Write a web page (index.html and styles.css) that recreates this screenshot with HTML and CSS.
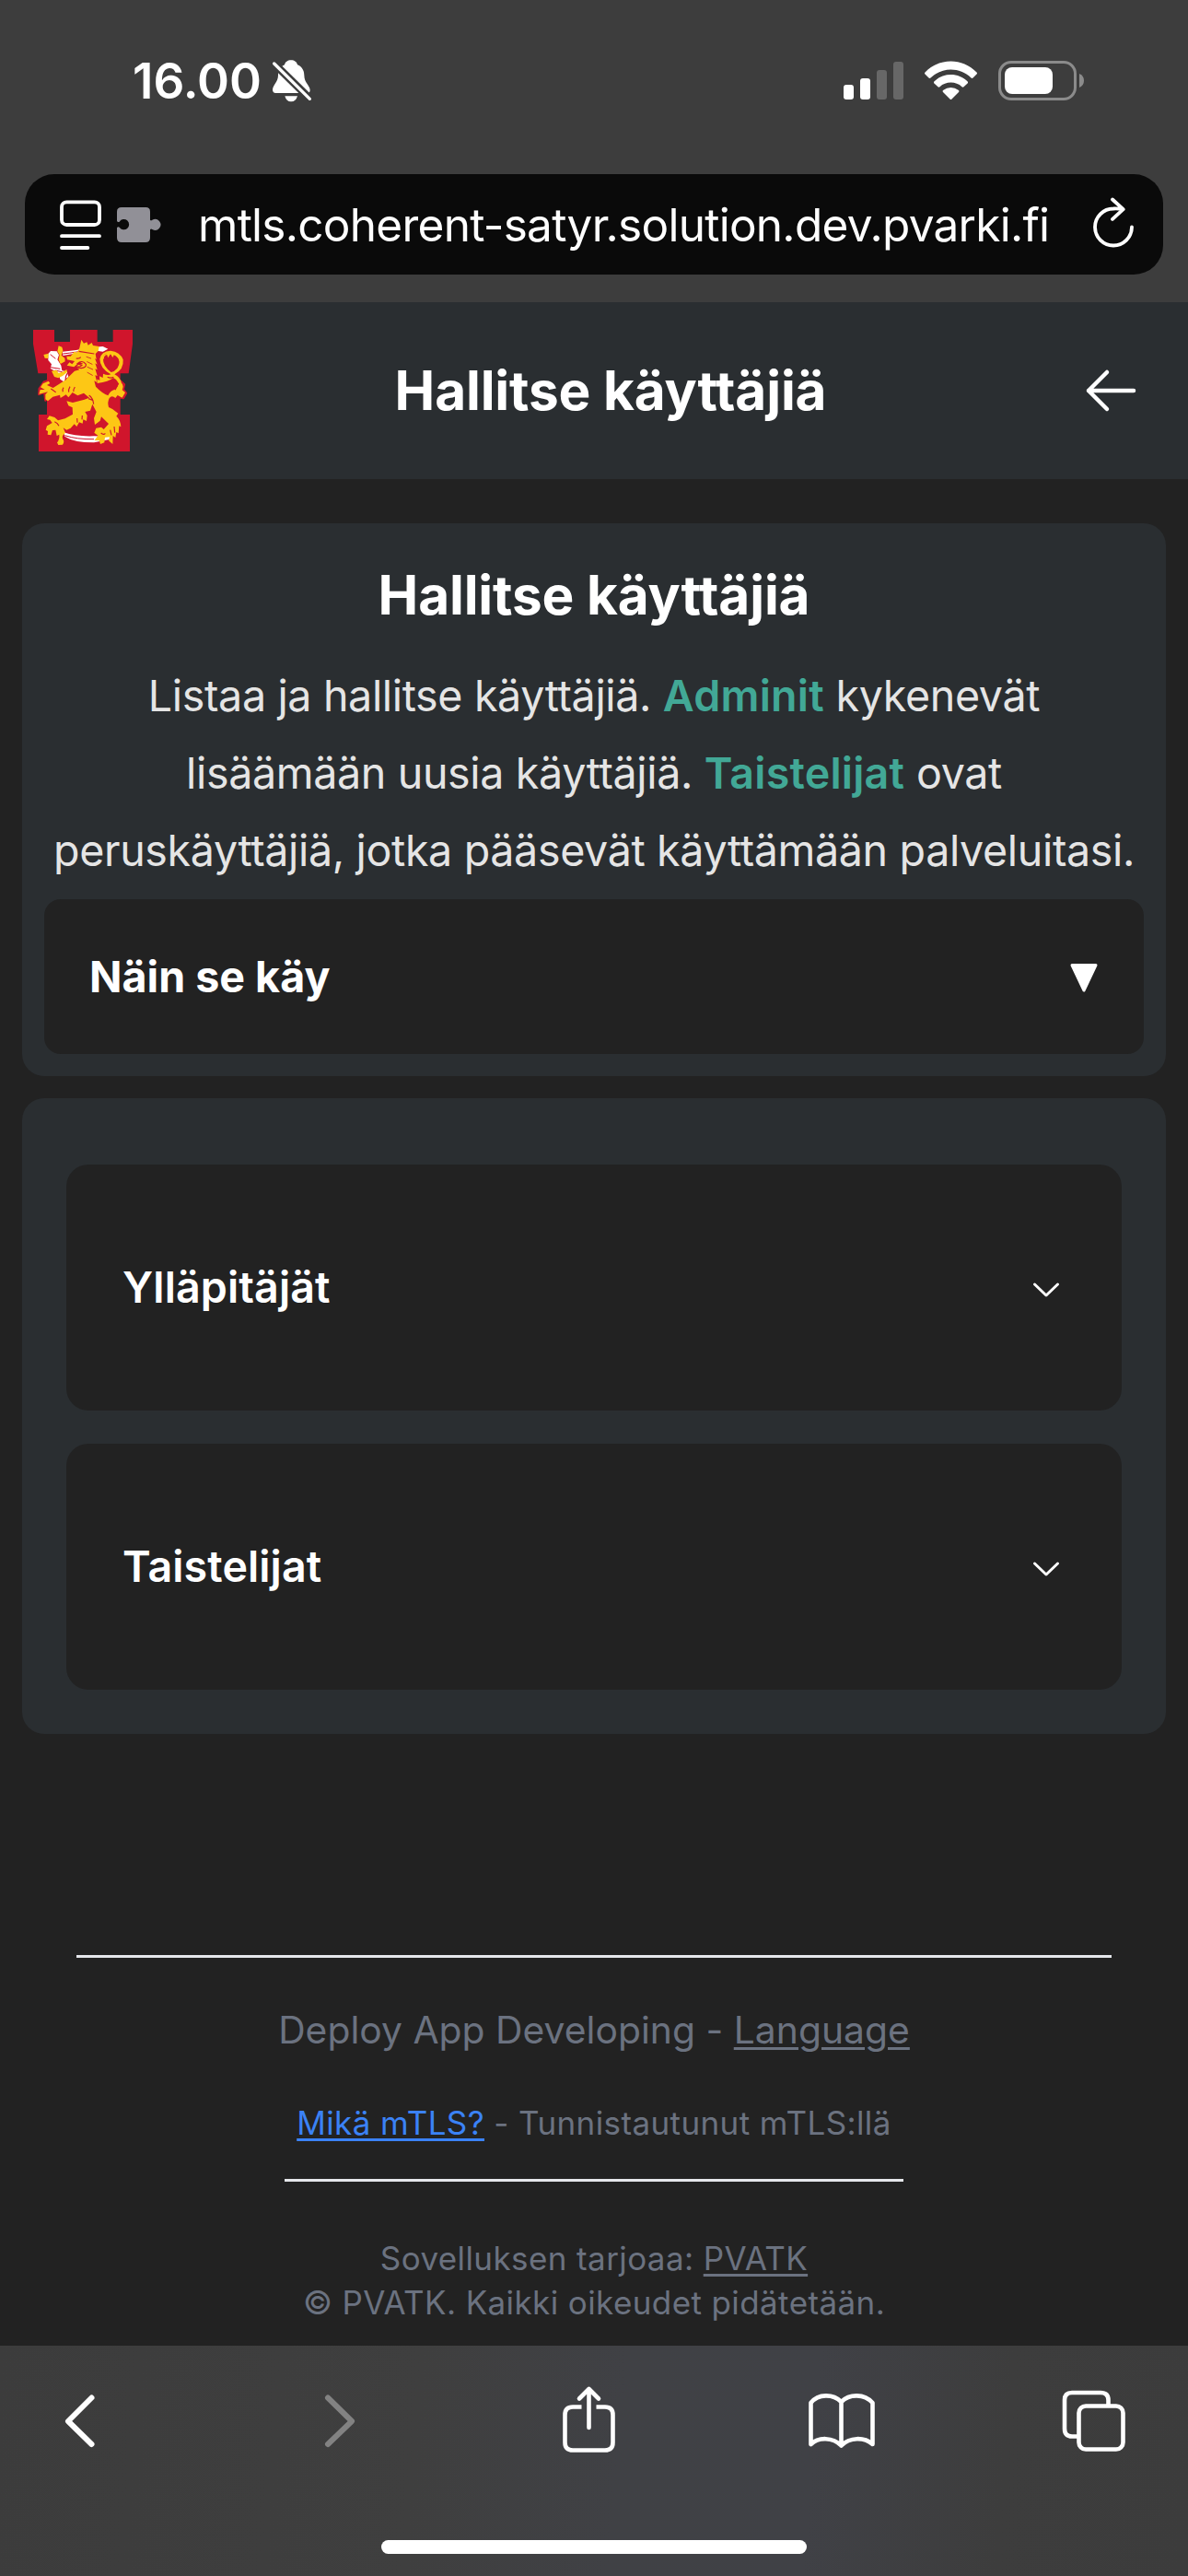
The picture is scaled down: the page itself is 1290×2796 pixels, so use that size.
FILE: index.html
```html
<!DOCTYPE html>
<html lang="fi">
<head>
<meta charset="utf-8">
<title>Hallitse käyttäjiä</title>
<link rel="stylesheet" href="styles.css">
</head>
<body>
<div class="screen">
  <div class="browser-top">
    <div class="status">
      <span class="clock">16.00</span>
      <svg class="bell" viewBox="36 24 150 150">
        <path d="M108 31C97 31 89 37 87 46C72 53 66 66 66 80C66 101 49 112 48 127Q48 138 58 138H160Q170 138 170 128C169 112 151 104 151 80C151 64 143 52 129 46C127 37 119 31 108 31Z" fill="#fff"/>
        <path d="M88 148H129Q124 166 108 166Q93 166 88 148Z" fill="#fff"/>
        <path d="M46 35L176 163" stroke="#3d3d3d" stroke-width="25"/>
        <path d="M53 42L169 157" stroke="#fff" stroke-width="10" stroke-linecap="round"/>
      </svg>
      <div class="indicators">
        <svg width="66" height="44" viewBox="916 65 66 44" fill="#fff">
          <rect x="916" y="91" width="11" height="16" rx="3"/>
          <rect x="934" y="84" width="11" height="23" rx="3"/>
          <rect x="952" y="75" width="11" height="32" rx="3" opacity=".22"/>
          <rect x="970" y="66" width="11" height="41" rx="3" opacity=".22"/>
        </svg>
        <svg width="58" height="44" viewBox="1004 65 58 44" fill="#fff">
          <path d="M1004.5 77.500C1020 61.500 1045 61.500 1060.500 77.500Q1061.500 78.500 1060.500 79.500L1056.500 83.500Q1055.500 84.300 1054.500 83.400C1042 71.500 1023 71.500 1010.500 83.400Q1009.500 84.300 1008.500 83.500L1004.500 79.500Q1003.500 78.500 1004.500 77.500Z"/>
          <path d="M1014.300 87.500C1024 77.500 1041 77.500 1050.700 87.500Q1051.500 88.500 1050.600 89.400L1046.500 93.300Q1045.600 94 1044.500 93.200C1038 87 1027 87 1020.500 93.200Q1019.400 94 1018.500 93.300L1014.400 89.400Q1013.500 88.500 1014.300 87.500Z"/>
          <path d="M1024 97Q1032.500 91 1041 97Q1042 98 1041 99L1033.500 106.500Q1032.500 107.500 1031.500 106.500L1024 99Q1023 98 1024 97Z"/>
        </svg>
        <svg width="94" height="44" viewBox="1084 65 94 44">
          <rect x="1085.500" y="66.500" width="82" height="40" rx="12.500" fill="none" stroke="#8b8b8b" stroke-width="3"/>
          <rect x="1091" y="72" width="52" height="29" rx="8" fill="#fff"/>
          <path d="M1172 79Q1177 81 1177 86.500T1172 94Z" fill="#8b8b8b"/>
        </svg>
      </div>
    </div>
    <div class="address">
      <svg class="reader" viewBox="27 30 144 174" fill="none" stroke="#fff" stroke-width="11.500" stroke-linecap="round">
        <rect x="36" y="43" width="123" height="74" rx="16"/>
        <path d="M36 153.500H159M36 192H121"/>
      </svg>
      <svg class="puzzle" viewBox="213 57 147 120" fill="#919097">
        <path d="M231 60H310Q324 60 324 74V101Q327 105 331 101A18 18 0 1 1 331 132Q327 129 324 133V159Q324 174 309 174H231Q216 174 216 159V127Q219 122 224 125A17 17 0 1 0 224 107Q219 110 216 105V74Q216 60 231 60Z"/>
      </svg>
      <span class="url">mtls.coherent-satyr.solution.dev.pvarki.fi</span>
      <svg class="reload" viewBox="42 43.500 147 174" fill="none" stroke="#fff" stroke-width="11.500" stroke-linecap="round" stroke-linejoin="round">
        <path d="M177 138A60 60 0 1 1 117 78Q132 77 147 80M114 48L149 80L114 112"/>
      </svg>
    </div>
  </div>

  <header class="header">
    <svg class="logo" viewBox="48 54 324 396">
      <path fill="#d0152c" d="M48 54H117V93H168V54H257V93H308V54H372V100L359 196H332V330H363V450H66V330H93V196H64L48 100Z"/>
      <g fill="#d0152c" stroke="#d0152c" stroke-width="7" stroke-linejoin="round">
        <path d="M97 219L83 224L68 246L67 264L85 258L88 284L110 266L130 240ZM332 220L345 232L341 248L351 260L342 276L312 272ZM100 334L93 344L110 347L90 365L88 385L100 400L130 370Z"/>
      </g>
      <g fill="#fff">
        <path d="M144 125Q190 121 240 111L275 108L292 116L275 125L240 120Q190 131 145 138Z"/>
        <path d="M97 132L105 123L125 124L132 136L127 151L139 170L142 187L158 190L163 207L153 214L148 223L136 215L132 199L119 188L104 180L108 166L97 153Z"/>
        <path d="M148 388Q185 402 246 400L298 402L300 410L246 421Q180 421 151 401Z"/>
      </g>
      <path d="M145 132Q185 128 238 117M151 398Q190 411 246 410M104 176L136 181M119 186L143 191M104 134L121 148" fill="none" stroke="#d0152c" stroke-width="3"/>
      <g fill="#fdc715">
        <path d="M131 106L142 110L145 121L140 137L151 146L152 157L137 165L131 151L134 136L127 124ZM82 135L98 131L97 147L86 146ZM108 188L124 185L131 195L147 190L157 183L159 192L144 204L130 211L117 207Z"/>
        <path d="M199 113L205 86L213 98L223 94L227 104L239 96L243 105L263 108L260 123L251 132L254 151L249 147L257 167L250 163L257 184L250 181L257 204L250 202L256 225L247 220L252 239Q271 259 292 268Q299 252 314 248Q327 239 325 226Q319 214 309 210Q294 224 257 228L256 215L265 218L264 205L275 210L276 197Q291 204 301 199Q265 178 265 149Q270 123 300 122Q331 125 341 151Q344 183 313 199Q332 209 335 226Q340 231 341 239L338 250L348 258L338 275L323 267L316 276Q304 265 296 277Q289 290 294 306Q309 311 325 326L319 335Q333 348 334 370L328 367L326 391L319 387L316 405L308 399L307 426L294 415L297 403L282 404L280 421L267 426L263 414L248 414L259 398L247 389L253 374L270 371L278 378L294 360L270 337L266 350L249 363L246 342L254 321L241 296L234 317L217 321L224 333L222 351L211 346L209 359L198 355L190 369L182 361L170 374L157 380L146 373L153 390Q139 399 145 410Q151 417 144 428L130 429L126 421Q135 410 133 395L125 399L121 380L111 381L106 397L95 395L96 384L89 380L93 367L110 357L103 347L93 345L101 334L118 339L129 349L152 343L177 329L176 307L163 301L157 286L177 291L215 281L231 275L213 260L193 268L176 258L163 274L155 265L137 276L135 266L112 272L96 286L88 280L88 264L96 256L67 263L71 249L86 249L72 241L80 229L98 221L103 228L93 234L113 243L152 218L183 188L199 184L188 175L198 165L211 165L200 158L181 175L158 170L166 160L175 166L183 156L159 151L157 140L170 140L182 125L191 128Z"/>
      </g>
      <path d="M276 149Q276 132 287 131L292 145L300 132L307 144L312 134L328 148Q331 165 322 179Q313 190 302 192Q275 171 276 149Z" fill="#d0152c"/>
      <path d="M276 149Q276 132 299 131Q325 132 331 157" fill="none" stroke="#fdc715" stroke-width="4"/>
      <path d="M192 164Q207 150 220 166Q222 177 204 179Q195 179 188 174Q202 176 207 169ZM188 147Q199 149 203 143M197 124L247 132M230 267Q243 276 245 296M228 278L244 284M315 250L326 228M290 208Q300 213 310 208M118 353Q128 357 132 367M269 390Q278 398 283 391M106 246L122 257M312 369L314 389M299 380L303 397M208 333L207 346M191 342L192 356M164 190Q151 205 154 217M147 242Q142 249 145 256M168 239Q162 249 164 257M184 240Q178 249 180 255" fill="none" stroke="#d0152c" stroke-width="3.500"/>
      <path d="M222 142L236 147M224 158L240 166M225 175L242 183M225 193L241 202" fill="none" stroke="#d0152c" stroke-width="2.500" stroke-linecap="round"/>
    </svg>
    <h1 class="title">Hallitse käyttäjiä</h1>
    <svg class="back" viewBox="1179 400 55 48" fill="none" stroke="#fff" stroke-width="4.500" stroke-linecap="round" stroke-linejoin="round">
      <path d="M1231 424H1182M1202 404L1182 424L1202 444"/>
    </svg>
  </header>

  <main class="main">
    <section class="card intro">
      <h2 class="heading">Hallitse käyttäjiä</h2>
      <p class="lead">Listaa ja hallitse käyttäjiä. <strong>Adminit</strong> kykenevät<br>lisäämään uusia käyttäjiä. <strong>Taistelijat</strong> ovat<br>peruskäyttäjiä, jotka pääsevät käyttämään palveluitasi.</p>
      <div class="howto">
        <span>Näin se käy</span>
        <svg width="30" height="32" viewBox="0 0 30 32"><path d="M2 1.500H28L15 29Z" fill="#fff" stroke="#fff" stroke-width="3" stroke-linejoin="round"/></svg>
      </div>
    </section>
    <section class="card groups">
      <div class="group"><span>Ylläpitäjät</span>
        <svg width="30" height="18" viewBox="0 0 30 18"><path d="M2.500 3L15 15L27.500 3" fill="none" stroke="#fff" stroke-width="3" stroke-linecap="round" stroke-linejoin="round"/></svg>
      </div>
      <div class="group"><span>Taistelijat</span>
        <svg width="30" height="18" viewBox="0 0 30 18"><path d="M2.500 3L15 15L27.500 3" fill="none" stroke="#fff" stroke-width="3" stroke-linecap="round" stroke-linejoin="round"/></svg>
      </div>
    </section>
  </main>

  <footer class="footer">
    <hr class="rule">
    <p class="product">Deploy App Developing - <a>Language</a></p>
    <p class="small mtls"><a class="link">Mikä mTLS?</a> - Tunnistautunut mTLS:llä</p>
    <hr class="rule short">
    <p class="small">Sovelluksen tarjoaa: <a>PVATK</a></p>
    <p class="small">© PVATK. Kaikki oikeudet pidätetään.</p>
  </footer>

  <nav class="toolbar">
    <div class="tools">
      <svg viewBox="50 2585 72 85"><path d="M99.500 2602.500L74 2628L99.500 2653"/></svg>
      <svg class="disabled" viewBox="325.500 2585 72 85"><path d="M355.500 2602.500L381.500 2628L355.500 2653"/></svg>
      <svg class="thin" viewBox="601 2585 72 85"><path d="M631.500 2612.500H622Q613.500 2612.500 613.500 2621V2651Q613.500 2659.500 622 2659.500H657Q665.500 2659.500 665.500 2651V2621Q665.500 2612.500 657 2612.500H647.500" stroke-linecap="butt"/><path d="M639.500 2635V2594M629 2603.500L639.500 2593L650 2603.500"/></svg>
      <svg class="thin" viewBox="876.500 2585 72 85"><path d="M913 2607V2654.500M880 2653V2608C888 2598 904 2598 913 2607C922 2598 938 2598 947 2608V2653C938 2645 922 2645 913 2654.500C904 2645 888 2645 880 2653Z"/></svg>
      <svg class="thin" viewBox="1152 2585 72 85"><rect x="1171.500" y="2611.500" width="48" height="47" rx="7.500"/><path d="M1170 2644.500H1164Q1156 2644.500 1156 2636V2605Q1156 2597 1164 2597H1195Q1203.500 2597 1203.500 2605V2610" stroke-linecap="butt"/></svg>
    </div>
    <div class="home"></div>
  </nav>
</div>
</body>
</html>
```
FILE: styles.css
```css
* { box-sizing: border-box; }
body { margin: 0; background: #222; color: #fff; font-family: Inter, "Liberation Sans", sans-serif; }
h1, h2, p { margin: 0; }
svg { display: block; flex: none; overflow: visible; }
.screen { width: 1290px; height: 2796px; display: flex; flex-direction: column; overflow: hidden; }

.browser-top { height: 328px; background: #3d3d3d; padding: 0 27px; flex: none; }
.status { height: 175px; display: flex; align-items: center; padding: 0 85px 0 117px; }
.clock { font-size: 53px; font-weight: 600; width: 148px; white-space: nowrap; }
.bell { width: 50px; height: 50px; }
.indicators { margin-left: auto; display: flex; gap: 22px; }
.address { margin-top: 14px; height: 109px; border-radius: 32px; background: #0a0a0a; display: flex; align-items: center; padding: 0 30px 0 37px; }
.reader { width: 48px; height: 58px; margin-right: 14px; }
.puzzle { width: 49px; height: 40px; margin-right: 40px; }
.url { font-size: 49.5px; letter-spacing: -0.73px; white-space: nowrap; }
.reload { width: 49px; height: 58px; margin-left: auto; }

.header { height: 192px; background: #2a2e31; display: flex; align-items: center; justify-content: space-between; padding: 0 56px 0 36px; flex: none; }
.logo { width: 108px; height: 132px; }
.title, .heading { font-size: 58.5px; font-weight: 700; letter-spacing: -0.15px; white-space: nowrap; }
.title { padding: 0 0 2px 3px; }
.back { width: 55px; height: 48px; }

.main { padding: 48px 24px 0; display: flex; flex-direction: column; gap: 24px; }
.card { background: #2a2e31; border-radius: 24px; }
.intro { height: 600px; padding: 36px 24px 24px; text-align: center; }
.heading { line-height: 84px; }
.lead { margin: 25px -12px 11px; font-size: 46.6px; line-height: 84px; letter-spacing: -0.36px; color: #e5e5e5; white-space: nowrap; }
.lead strong { font-weight: 600; color: #42a896; letter-spacing: 0.2px; }
.howto { height: 168px; background: #222; border-radius: 18px; padding: 0 50px 0 49px; display: flex; align-items: center; justify-content: space-between; font-size: 46.6px; font-weight: 700; }
.howto svg { margin-top: 3px; }
.groups { height: 690px; padding: 72px 48px 48px; display: flex; flex-direction: column; gap: 36px; }
.group { flex: 1; background: #222; border-radius: 24px; padding: 0 67px 0 61px; display: flex; align-items: center; justify-content: space-between; font-size: 46.6px; font-weight: 600; letter-spacing: 0.1px; }
.group span { padding-bottom: 2px; }
.group svg { margin-top: 5px; }

.footer { margin-top: 240px; padding: 0 83px; color: #6b7280; text-align: center; }
.rule { margin: 0; border: 0; height: 3px; background: #e5e7eb; }
.product { margin-top: 48px; font-size: 40.8px; line-height: 60px; letter-spacing: 0.02px; }
.small { font-size: 35px; line-height: 48px; letter-spacing: 0.4px; }
.mtls { margin: 47px 0 37px; }
.short { width: 672px; margin: 0 auto 59px; }
.footer a { text-decoration: underline; text-decoration-thickness: 3px; text-underline-offset: 4px; }
.footer .link { color: #3b82f6; }

.toolbar { margin-top: auto; height: 250px; flex: none; padding-top: 39px; background: linear-gradient(95deg, #3c3c3c 0%, #3f3f3f 35%, #404145 52%, #404146 68%, #3d3d3d 84%, #3c3c3c 100%); }
.tools { display: flex; justify-content: space-between; padding: 0 66px 0 50px; }
.tools svg { width: 72px; height: 85px; fill: none; stroke: #fff; stroke-width: 6; stroke-linecap: round; stroke-linejoin: round; }
.tools .thin { stroke-width: 4.6; }
.tools .disabled { stroke: #828282; }
.home { width: 462px; height: 15px; border-radius: 8px; background: #fff; margin: 87px auto 0; }
```
